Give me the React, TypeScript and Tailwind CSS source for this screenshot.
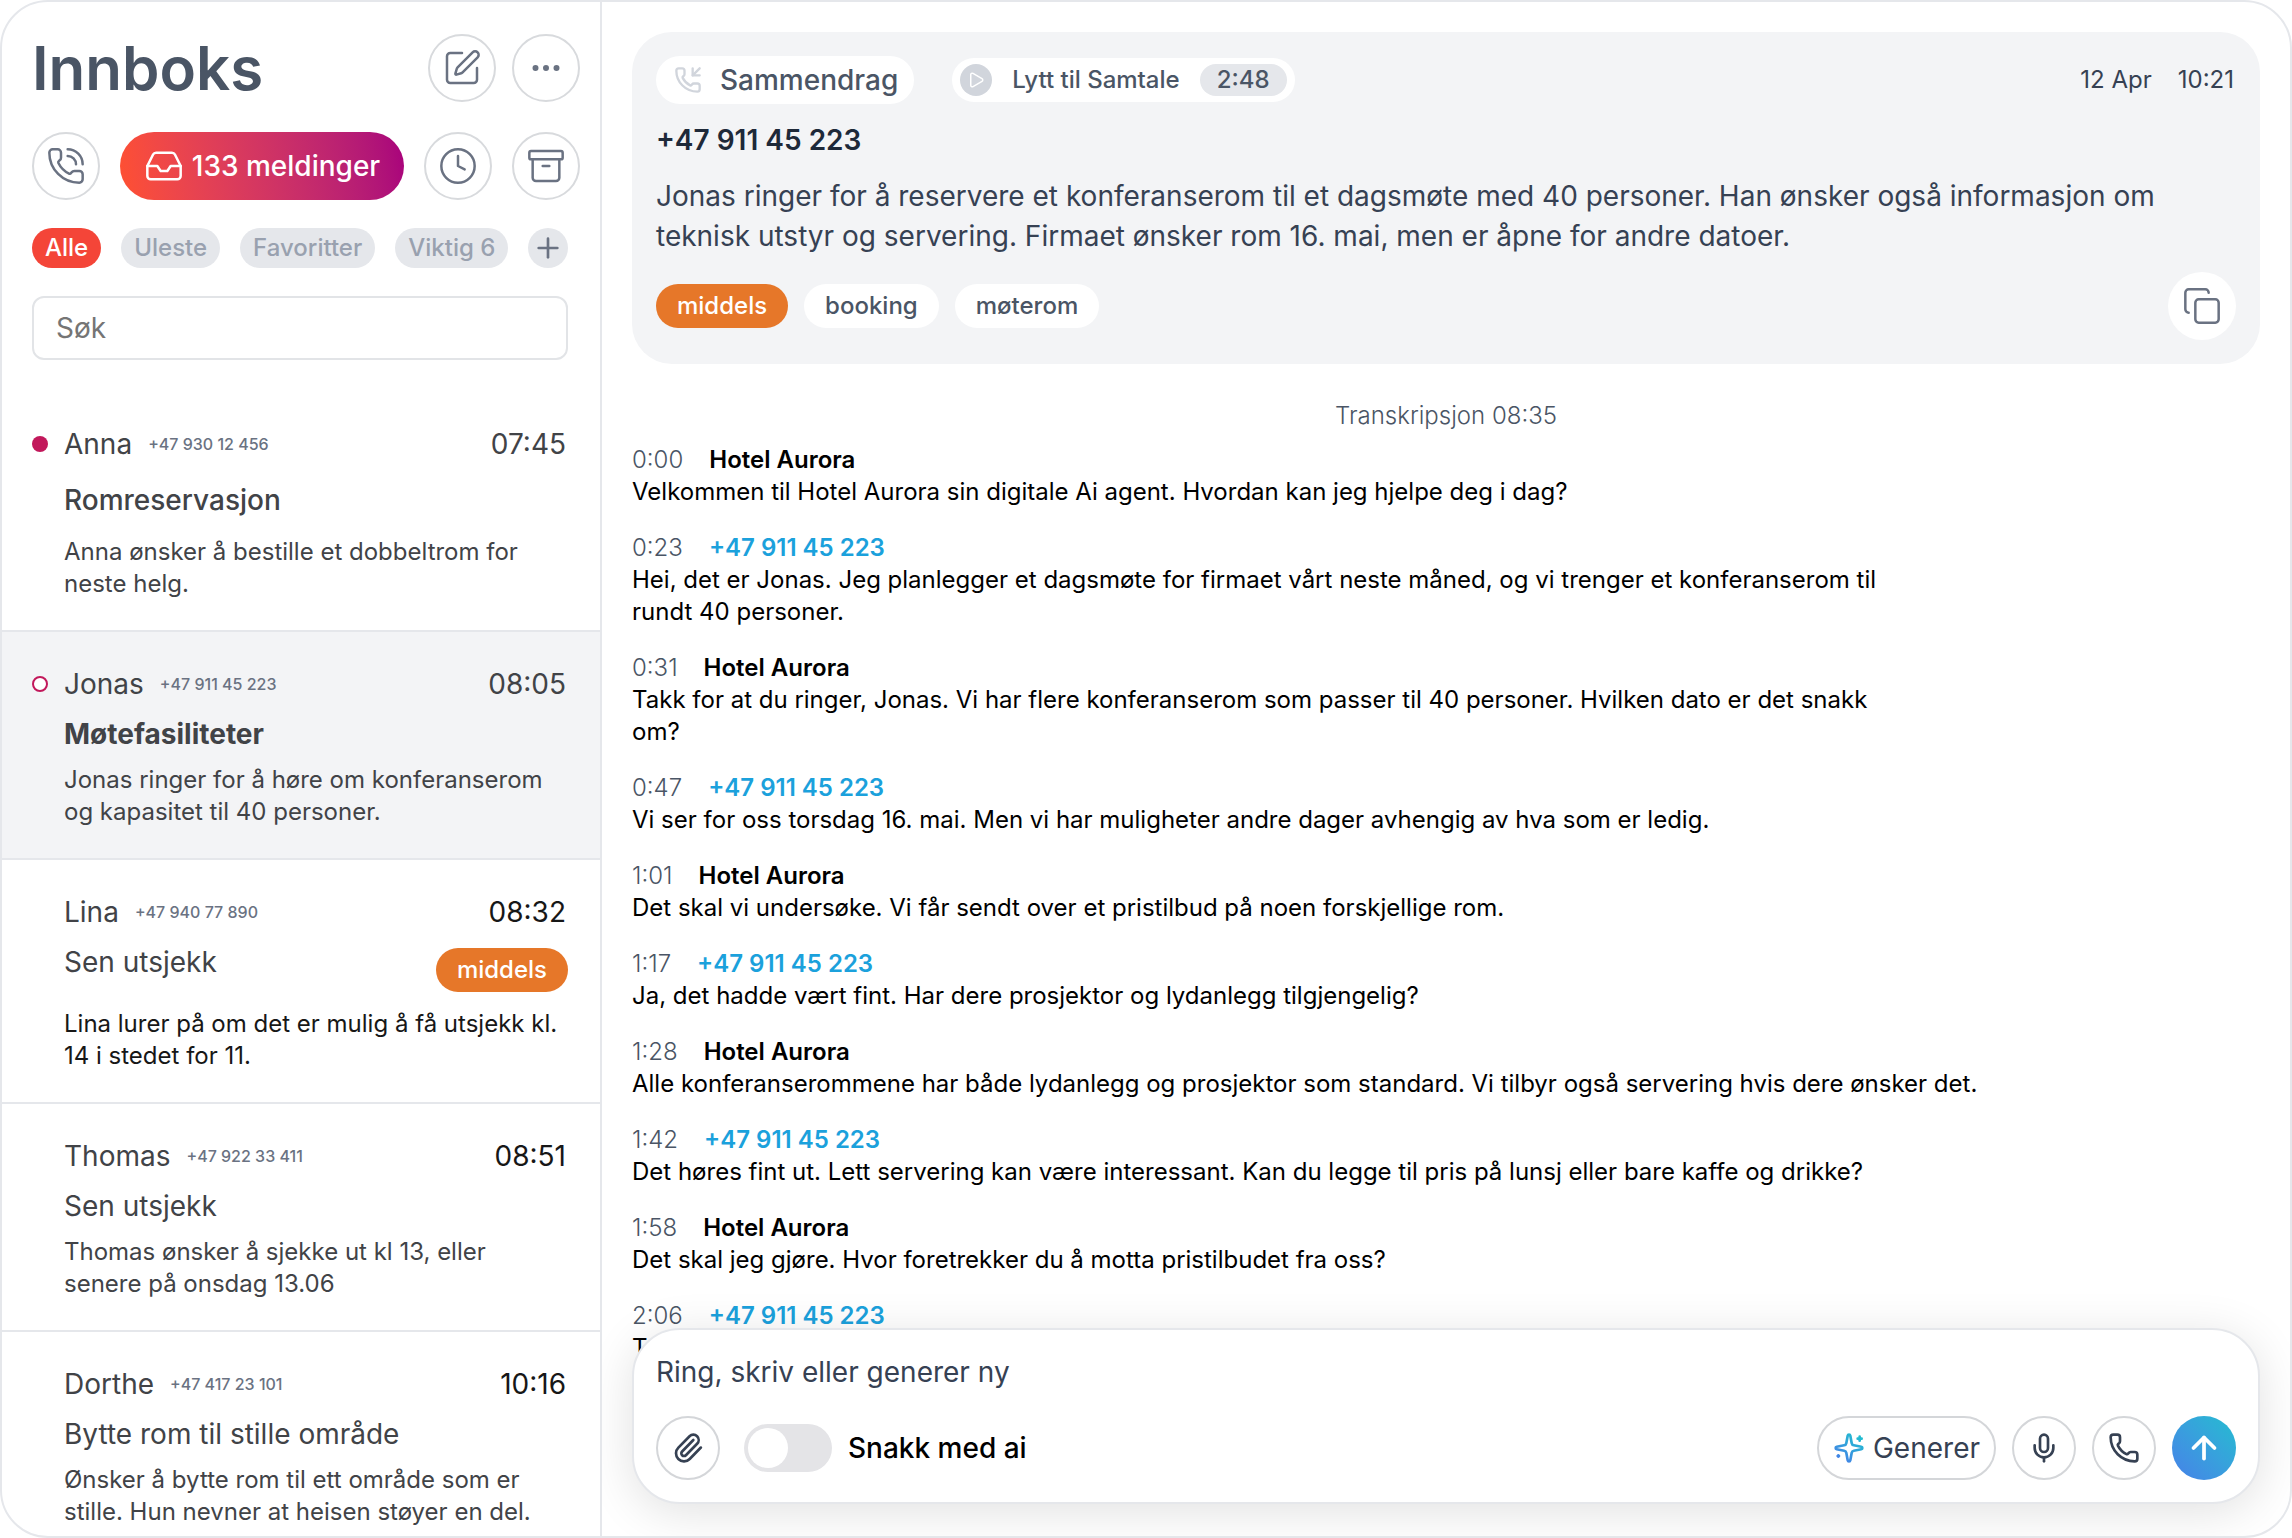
import React from 'react';
import {
  Archive,
  ArrowUp,
  Clock,
  Copy,
  Ellipsis,
  Inbox,
  Mic,
  Paperclip,
  Phone,
  PhoneCall,
  PhoneIncoming,
  Play,
  Plus,
  SquarePen,
} from 'lucide-react';

type Message = {
  name: string;
  phone: string;
  time: string;
  title: string;
  text: string;
  status?: 'unread' | 'open';
  tag?: string;
  active?: boolean;
  titleStyle?: string;
  timeStyle?: string;
  textStyle?: string;
};

const filters = ['Uleste', 'Favoritter', 'Viktig 6'];

const messages: Message[] = [
  {
    name: 'Anna',
    phone: '+47 930 12 456',
    time: '07:45',
    title: 'Romreservasjon',
    text: 'Anna ønsker å bestille et dobbeltrom for\nneste helg.',
    status: 'unread',
    titleStyle: 'font-medium',
  },
  {
    name: 'Jonas',
    phone: '+47 911 45 223',
    time: '08:05',
    title: 'Møtefasiliteter',
    text: 'Jonas ringer for å høre om konferanserom\nog kapasitet til 40 personer.',
    status: 'open',
    active: true,
    titleStyle: 'font-bold',
  },
  {
    name: 'Lina',
    phone: '+47 940 77 890',
    time: '08:32',
    title: 'Sen utsjekk',
    text: 'Lina lurer på om det er mulig å få utsjekk kl.\n14 i stedet for 11.',
    tag: 'middels',
    timeStyle: 'text-neutral-900',
    textStyle: 'text-neutral-900',
  },
  {
    name: 'Thomas',
    phone: '+47 922 33 411',
    time: '08:51',
    title: 'Sen utsjekk',
    text: 'Thomas ønsker å sjekke ut kl 13, eller\nsenere på onsdag 13.06',
    timeStyle: 'text-neutral-900',
  },
  {
    name: 'Dorthe',
    phone: '+47 417 23 101',
    time: '10:16',
    title: 'Bytte rom til stille område',
    text: 'Ønsker å bytte rom til ett område som er\nstille. Hun nevner at heisen støyer en del.',
    timeStyle: 'text-neutral-900',
  },
];

const transcript = [
  { at: '0:00', agent: true, text: 'Velkommen til Hotel Aurora sin digitale Ai agent. Hvordan kan jeg hjelpe deg i dag?' },
  { at: '0:23', agent: false, text: 'Hei, det er Jonas. Jeg planlegger et dagsmøte for firmaet vårt neste måned, og vi trenger et konferanserom til\nrundt 40 personer.' },
  { at: '0:31', agent: true, text: 'Takk for at du ringer, Jonas. Vi har flere konferanserom som passer til 40 personer. Hvilken dato er det snakk\nom?' },
  { at: '0:47', agent: false, text: 'Vi ser for oss torsdag 16. mai. Men vi har muligheter andre dager avhengig av hva som er ledig.' },
  { at: '1:01', agent: true, text: 'Det skal vi undersøke. Vi får sendt over et pristilbud på noen forskjellige rom.' },
  { at: '1:17', agent: false, text: 'Ja, det hadde vært fint. Har dere prosjektor og lydanlegg tilgjengelig?' },
  { at: '1:28', agent: true, text: 'Alle konferanserommene har både lydanlegg og prosjektor som standard. Vi tilbyr også servering hvis dere ønsker det.' },
  { at: '1:42', agent: false, text: 'Det høres fint ut. Lett servering kan være interessant. Kan du legge til pris på lunsj eller bare kaffe og drikke?' },
  { at: '1:58', agent: true, text: 'Det skal jeg gjøre. Hvor foretrekker du å motta pristilbudet fra oss?' },
  { at: '2:06', agent: false, text: 'Takk.' },
];

const RoundButton = ({ label, children }: { label: string; children: React.ReactNode }) => (
  <button
    aria-label={label}
    className="flex size-[68px] shrink-0 items-center justify-center rounded-full border-2 border-[#d8dadd] text-gray-500"
  >
    {children}
  </button>
);

const ComposerButton = ({ label, children }: { label: string; children: React.ReactNode }) => (
  <button
    type="button"
    aria-label={label}
    className="flex size-16 shrink-0 items-center justify-center rounded-full border-2 border-[#d4d6d9] text-gray-700"
  >
    {children}
  </button>
);

const SparklesIcon = () => (
  <svg width="32" height="32" viewBox="0 0 24 24" fill="none" stroke="url(#spark)" strokeWidth="2" strokeLinecap="round" strokeLinejoin="round">
    <defs>
      <linearGradient id="spark" gradientUnits="userSpaceOnUse" x1="5" y1="22" x2="19" y2="3">
        <stop stopColor="#4680e8" />
        <stop offset="1" stopColor="#22bcd0" />
      </linearGradient>
    </defs>
    <path d="M11.017 2.814a1 1 0 0 1 1.966 0l1.051 5.558a2 2 0 0 0 1.594 1.594l5.558 1.051a1 1 0 0 1 0 1.966l-5.558 1.051a2 2 0 0 0-1.594 1.594l-1.051 5.558a1 1 0 0 1-1.966 0l-1.051-5.558a2 2 0 0 0-1.594-1.594l-5.558-1.051a1 1 0 0 1 0-1.966l5.558-1.051a2 2 0 0 0 1.594-1.594z" />
    <path d="M20 3.500v3M21.500 5h-3M4 17.500v1M4.500 18h-1" />
  </svg>
);

const MessageItem = ({ m }: { m: Message }) => (
  <li className={`flex gap-4 border-b-2 border-gray-200 pt-8 pr-8 pb-[30px] pl-[30px] ${m.active ? 'bg-gray-100' : ''}`}>
    <span className="flex h-10 w-4 shrink-0 items-center">
      {m.status === 'unread' && <span className="size-4 rounded-full bg-[#c2185b]" />}
      {m.status === 'open' && <span className="size-4 rounded-full border-2 border-[#c2185b] bg-white" />}
    </span>
    <div className={`flex min-w-0 flex-1 flex-col text-[#414347] ${m.status === 'unread' ? 'gap-4' : 'gap-[10px]'}`}>
      <div className="flex h-10 items-center gap-4 pr-[2px]">
        <h2 className="text-[28px] leading-10">{m.name}</h2>
        <a href="#" className="text-base font-medium text-gray-500">{m.phone}</a>
        <time className={`ml-auto text-[28px] leading-10 ${m.timeStyle ?? ''}`}>{m.time}</time>
      </div>
      <div className="flex items-start justify-between">
        <h3 className={`text-[28px] leading-10 ${m.titleStyle ?? ''}`}>{m.title}</h3>
        {m.tag && (
          <span className="my-[6px] rounded-full bg-[#e67729] px-[21px] py-[6px] text-2xl font-medium text-white">{m.tag}</span>
        )}
      </div>
      <p className={`text-2xl whitespace-pre ${m.textStyle ?? ''}`}>{m.text}</p>
    </div>
  </li>
);

const Sidebar = () => (
  <aside className="flex w-[600px] shrink-0 flex-col overflow-hidden border-r-2 border-gray-200">
    <div className="flex flex-col pt-8 pr-5 pl-[30px]">
      <div className="flex items-center gap-4">
        <h1 className="mr-auto text-[60px] leading-[68px] font-semibold text-gray-600">Innboks</h1>
        <RoundButton label="Ny melding"><SquarePen size={40} strokeWidth={1.5} /></RoundButton>
        <RoundButton label="Mer"><Ellipsis size={36} /></RoundButton>
      </div>
      <div className="mt-[30px] flex items-center gap-5">
        <RoundButton label="Samtaler"><PhoneCall size={40} strokeWidth={1.5} /></RoundButton>
        <button className="flex h-[68px] flex-1 items-center justify-center gap-2 rounded-full bg-linear-80 from-[#ff5030] to-[#a8007c] text-[28px] font-medium text-white">
          <Inbox size={40} strokeWidth={1.5} />
          133 meldinger
        </button>
        <RoundButton label="Senere"><Clock size={40} strokeWidth={1.5} /></RoundButton>
        <RoundButton label="Arkiv"><Archive size={40} strokeWidth={1.5} /></RoundButton>
      </div>
      <div className="mt-7 flex items-center gap-5 text-2xl font-medium">
        <button className="h-10 rounded-full bg-[#f44538] px-[13px] text-white">Alle</button>
        {filters.map((f) => (
          <button key={f} className="h-10 rounded-full bg-gray-200 px-[13px] whitespace-nowrap text-gray-400">{f}</button>
        ))}
        <button aria-label="Nytt filter" className="flex size-10 items-center justify-center rounded-full bg-gray-200 text-gray-500">
          <Plus size={32} strokeWidth={2} />
        </button>
      </div>
      <input
        type="search"
        aria-label="Søk"
        placeholder="Søk"
        className="mt-7 mr-3 h-16 rounded-xl border-2 border-[#e2e4e7] px-[22px] text-[28px] placeholder:text-[#757575]"
      />
    </div>
    <ul className="mt-8">
      {messages.map((m) => <MessageItem key={m.name} m={m} />)}
    </ul>
  </aside>
);

const Summary = () => (
  <section className="flex flex-col gap-4 rounded-[40px] bg-gray-100 p-6">
    <div className="flex h-12 items-center">
      <h2 className="flex h-12 items-center gap-[18px] rounded-full bg-white pr-4 pl-[18px] text-[28px] font-medium text-gray-600">
        <PhoneIncoming size={28} strokeWidth={2} className="text-gray-300" />
        Sammendrag
      </h2>
      <button className="ml-[38px] flex h-11 items-center gap-5 rounded-full bg-white px-2 text-2xl font-medium text-gray-600">
        <span className="flex size-8 items-center justify-center rounded-full bg-gray-300 text-white">
          <Play size={18} strokeWidth={2} />
        </span>
        Lytt til Samtale
        <span className="rounded-full bg-gray-200 px-[17px]">2:48</span>
      </button>
      <div className="ml-auto flex gap-[26px] pr-[2px] text-2xl text-gray-700">
        <span>12 Apr</span>
        <span>10:21</span>
      </div>
    </div>
    <h3 className="text-[28px] leading-10 font-semibold text-gray-800">+47 911 45 223</h3>
    <p className="max-w-[1520px] text-[28px] leading-10 text-gray-700">
      Jonas ringer for å reservere et konferanserom til et dagsmøte med 40 personer. Han ønsker også informasjon om
      teknisk utstyr og servering. Firmaet ønsker rom 16. mai, men er åpne for andre datoer.
    </p>
    <div className="flex items-center gap-4 text-2xl font-medium">
      <span className="rounded-full bg-[#e67729] px-[21px] py-[6px] text-white">middels</span>
      <span className="rounded-full bg-white px-[21px] py-[6px] text-gray-600">booking</span>
      <span className="rounded-full bg-white px-[21px] py-[6px] text-gray-600">møterom</span>
      <button aria-label="Kopier" className="ml-auto flex size-[68px] items-center justify-center rounded-full bg-white text-gray-500">
        <Copy size={40} strokeWidth={1.5} />
      </button>
    </div>
  </section>
);

const Composer = () => (
  <form className="absolute inset-x-[30px] bottom-8 flex flex-col gap-6 rounded-[48px] border-2 border-gray-200 bg-white p-[22px] shadow-[0_8px_48px_rgba(0,0,0,0.12)]">
    <input
      type="text"
      aria-label="Melding"
      placeholder="Ring, skriv eller generer ny"
      className="h-10 w-full text-[28px] placeholder:text-gray-700"
    />
    <div className="flex items-center gap-4">
      <ComposerButton label="Legg ved"><Paperclip size={32} /></ComposerButton>
      <label className="ml-2 flex items-center gap-4 text-[28px] font-medium text-black">
        <input
          type="checkbox"
          role="switch"
          className="h-12 w-[88px] appearance-none rounded-full bg-[#e4e4e7] p-1 before:block before:size-10 before:rounded-full before:bg-white checked:bg-sky-500 checked:before:ml-10"
        />
        Snakk med ai
      </label>
      <button type="button" className="ml-auto flex h-16 items-center gap-2 rounded-full border-2 border-[#d4d6d9] px-[14px] text-[28px] text-gray-700">
        <SparklesIcon />
        Generer
      </button>
      <ComposerButton label="Diktér"><Mic size={32} /></ComposerButton>
      <ComposerButton label="Ring"><Phone size={32} /></ComposerButton>
      <button
        aria-label="Send"
        className="flex size-16 items-center justify-center rounded-full bg-linear-to-tr from-[#4680e8] to-[#22bcd0] text-white"
      >
        <ArrowUp size={36} strokeWidth={2.5} />
      </button>
    </div>
  </form>
);

const App: React.FC = () => (
  <div className="flex h-screen overflow-hidden rounded-[48px] border-2 border-gray-200 bg-white font-['Inter',sans-serif]">
    <Sidebar />
    <main className="relative min-w-0 flex-1 overflow-hidden p-[30px]">
      <Summary />
      <p className="mt-9 text-center text-2xl font-light text-gray-600">Transkripsjon 08:35</p>
      <div className="mt-3 flex flex-col gap-6 text-2xl text-black">
        {transcript.map((line) => (
          <article key={line.at}>
            <header className="flex gap-[26px]">
              <time className="font-light text-gray-600">{line.at}</time>
              <strong className={`font-semibold ${line.agent ? '' : 'text-[#1ba1dc]'}`}>
                {line.agent ? 'Hotel Aurora' : '+47 911 45 223'}
              </strong>
            </header>
            <p className="whitespace-pre-line">{line.text}</p>
          </article>
        ))}
      </div>
      <Composer />
    </main>
  </div>
);

export default App;
